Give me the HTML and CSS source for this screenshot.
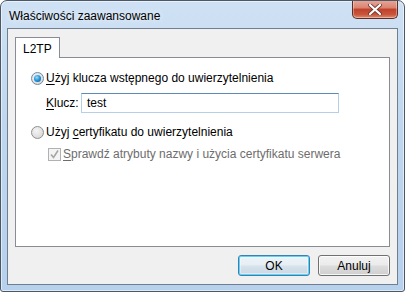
FILE: index.html
```html
<!DOCTYPE html>
<html lang="pl">
<head>
<meta charset="utf-8">
<title>Właściwości zaawansowane</title>
<link rel="stylesheet" href="styles.css">
</head>
<body>
<div class="window">
  <div class="titlebar">
    <div class="title">Właściwości zaawansowane</div>
    <div class="close">
      <svg width="14" height="11" viewBox="0 0 14 11"><path d="M2 1 L12 10 M12 1 L2 10" stroke="#6b3a32" stroke-width="3.8" stroke-linecap="round"/><path d="M2 1 L12 10 M12 1 L2 10" stroke="#ffffff" stroke-width="2.2" stroke-linecap="round"/></svg>
    </div>
  </div>
  <div class="client">
    <div class="tabs">
      <div class="tab">L2TP</div>
    </div>
    <div class="panel">
      <label class="row first">
        <span class="radio checked"><span class="dot"></span></span>
        <span><u>U</u>żyj klucza wstępnego do uwierzytelnienia</span>
      </label>
      <div class="row keyrow">
        <span class="keylabel"><u>K</u>lucz:</span>
        <div class="input">test</div>
      </div>
      <label class="row second">
        <span class="radio"></span>
        <span>Użyj <u>c</u>ertyfikatu do uwierzytelnienia</span>
      </label>
      <label class="row sub disabled">
        <span class="check">
          <svg width="11" height="11" viewBox="0 0 11 11"><path d="M2 5.5 L4.5 8.5 L9 1.5" fill="none" stroke="#a6a6a6" stroke-width="1.6"/></svg>
        </span>
        <span><u>S</u>prawdź atrybuty nazwy i użycia certyfikatu serwera</span>
      </label>
    </div>
    <div class="buttons">
      <button class="btn default">OK</button>
      <button class="btn">Anuluj</button>
    </div>
  </div>
</div>
</body>
</html>
```
FILE: styles.css
```css
html, body {
  margin: 0;
  padding: 0;
  background: #ffffff;
}
body {
  font-family: "Liberation Sans", Arial, sans-serif;
  font-size: 12px;
  color: #000;
}
.window {
  width: 405px;
  height: 292px;
  box-sizing: border-box;
  border: 1px solid #4d5866;
  border-radius: 7px 7px 3px 3px;
  background: linear-gradient(to bottom, #cfe1f4 0%, #c0d7ef 40%, #b7d0ec 100%);
  box-shadow: inset 0 0 0 1px rgba(255,255,255,0.55);
  display: flex;
  flex-direction: column;
  overflow: hidden;
}
.titlebar {
  height: 27px;
  display: flex;
  align-items: flex-start;
  flex: none;
}
.title {
  flex: 1;
  padding: 8px 0 0 8px;
  line-height: 15px;
  text-shadow: 0 0 6px rgba(255,255,255,0.9);
}
.close {
  margin: -1px 6px 0 0;
  width: 46px;
  height: 19px;
  box-sizing: border-box;
  border: 1px solid #5b2e27;
  border-top: none;
  border-radius: 0 0 5px 5px;
  background: linear-gradient(to bottom, #e9a99a 0%, #d9826f 45%, #c0412b 50%, #c9543a 80%, #dd8d6e 100%);
  box-shadow: inset 0 0 0 1px rgba(255,255,255,0.35);
  display: flex;
  align-items: center;
  justify-content: center;
}
.client {
  flex: 1;
  margin: 0 6px 6px 6px;
  border: 1px solid #6f7f90;
  background: #f0f0f0;
  padding: 8px 7px 8px 7px;
  display: flex;
  flex-direction: column;
}
.tabs {
  display: flex;
  height: 20px;
  position: relative;
  z-index: 1;
}
.tab {
  width: 45px;
  height: 21px;
  box-sizing: border-box;
  border: 1px solid #898c95;
  border-bottom: none;
  background: #fff;
  padding: 4px 0 0 7px;
  line-height: 14px;
}
.panel {
  height: 190px;
  box-sizing: border-box;
  border: 1px solid #898c95;
  background: #fff;
  padding: 0 0 0 15px;
  display: flex;
  flex-direction: column;
}
.row {
  display: flex;
  align-items: center;
  height: 16px;
  line-height: 16px;
}
.row u { text-decoration: underline; text-underline-offset: 2px; }
.first { margin-top: 12px; }
.keyrow { margin-top: 7px; height: 20px; padding-left: 15px; }
.second { margin-top: 11px; }
.sub { margin-top: 6px; padding-left: 17px; }
.disabled { color: #6d6d6d; }
.radio {
  width: 13px;
  height: 13px;
  box-sizing: border-box;
  border-radius: 50%;
  border: 1px solid #8e8f8f;
  background: radial-gradient(circle at 40% 35%, #f4f4f4 0%, #e3e3e3 50%, #cfcfcf 100%);
  margin-right: 2px;
  display: flex;
  align-items: center;
  justify-content: center;
  flex: none;
}
.radio.checked { border-color: #6f8aa6; }
.dot {
  width: 7px;
  height: 7px;
  border-radius: 50%;
  background: radial-gradient(circle at 40% 35%, #9fdcf9 0%, #2a9ad9 45%, #0c4c8a 100%);
}
.keylabel { width: 35px; }
.input {
  width: 258px;
  height: 20px;
  box-sizing: border-box;
  border: 1px solid #b5cfe7;
  border-top-color: #5d8ab5;
  background: #fff;
  padding: 0 0 0 5px;
  line-height: 18px;
}
.check {
  width: 13px;
  height: 13px;
  box-sizing: border-box;
  border: 1px solid #b1b1b1;
  background: #f4f4f4;
  margin-right: 2px;
  display: flex;
  align-items: center;
  justify-content: center;
  flex: none;
}
.buttons {
  margin-top: 8px;
  display: flex;
  justify-content: flex-end;
  gap: 8px;
}
.btn {
  font: inherit;
  color: #000;
  width: 72px;
  height: 21px;
  box-sizing: border-box;
  border: 1px solid #707070;
  border-radius: 3px;
  background: linear-gradient(to bottom, #f2f2f2 0%, #ebebeb 48%, #dddddd 52%, #cfcfcf 100%);
  box-shadow: inset 0 0 0 1px rgba(255,255,255,0.8);
  padding: 0;
}
.btn.default {
  border-color: #3c7fb1;
  box-shadow: inset 0 0 0 1px #5fd3f5, inset 0 0 0 2px rgba(255,255,255,0.4);
  background: linear-gradient(to bottom, #eef4f8 0%, #e6eef4 48%, #d6e2ec 52%, #c9d8e4 100%);
}
```
